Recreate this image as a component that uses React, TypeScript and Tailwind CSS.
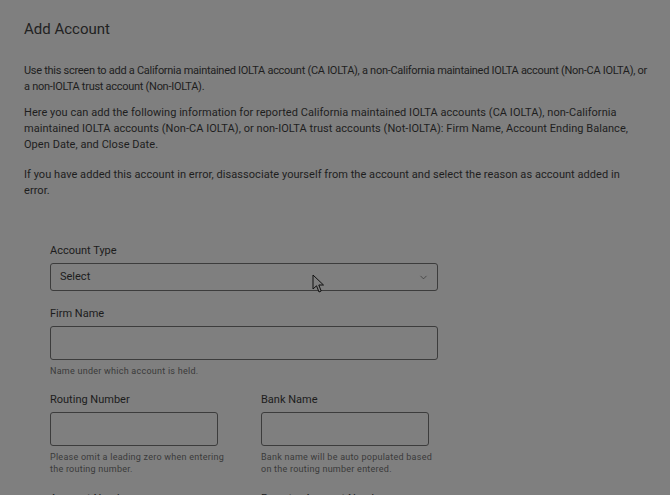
import { ChevronDown } from "lucide-react";

function Field({ label, help, className = "" }: { label: string; help?: React.ReactNode; className?: string }) {
    return (
        <div className={className}>
            <label className="block text-[11px] leading-[14px] text-[#1c1c1c]">{label}</label>
            <div className="mt-[5px] h-[34px] rounded-[3px] border border-[#3c3c3c]" />
            {help && <p className="mt-[5px] whitespace-nowrap text-[9px] leading-[12px] tracking-[0.25px] text-[#3a3a3a]">{help}</p>}
        </div>
    );
}

export default function App() {
    return (
        <div className="relative h-[495px] overflow-hidden bg-[#7f7f7f] font-['Roboto',sans-serif] text-[#1e1e1e]">
            <div className="px-6 pt-[19px]">
                <h1 className="text-[15px] leading-[20px] text-[#222]">Add Account</h1>

                <div className="mt-[24px] space-y-[10px] text-[11px] leading-[16px]">
                    <p className="w-[626px] tracking-[-0.28px]">
                        Use this screen to add a California maintained IOLTA account (CA IOLTA), a non-California maintained IOLTA account (Non-CA IOLTA), or a non-IOLTA trust account (Non-IOLTA).
                    </p>
                    <p className="w-[614px] tracking-[0.05px]">
                        Here you can add the following information for reported California maintained IOLTA accounts (CA IOLTA), non-California maintained IOLTA accounts (Non-CA IOLTA), or non-IOLTA trust accounts (Not-IOLTA): Firm Name, Account Ending Balance, Open Date, and Close Date.
                    </p>
                    <p className="w-[614px] pt-[4px] tracking-[0.05px]">
                        If you have added this account in error, disassociate yourself from the account and select the reason as account added in error.
                    </p>
                </div>

                <form className="mt-[45px] w-[388px] pl-[26px] box-content">
                    <div>
                        <label className="block text-[11px] leading-[14px] text-[#1c1c1c]">Account Type</label>
                        <div className="mt-[5px] flex h-[28px] items-center justify-between rounded-[3px] border border-[#3c3c3c] pl-[9px] pr-[8px]">
                            <span className="text-[11px] text-[#1c1c1c]">Select</span>
                            <ChevronDown className="h-[11px] w-[11px] text-[#333]" strokeWidth={1.5} />
                        </div>
                    </div>

                    <Field className="mt-[16px]" label="Firm Name" help="Name under which account is held." />

                    <div className="mt-[16px] grid grid-cols-[168px_168px] gap-x-[43px]">
                        <Field label="Routing Number" help={<>Please omit a leading zero when entering<br />the routing number.</>} />
                        <Field label="Bank Name" help={<>Bank name will be auto populated based<br />on the routing number entered.</>} />
                    </div>

                    <div className="mt-[17px] grid grid-cols-[168px_168px] gap-x-[43px]">
                        <Field label="Account Number" />
                        <Field label="Re-enter Account Number" />
                    </div>
                </form>
            </div>

            {/* mouse cursor */}
            <svg className="absolute left-[312px] top-[274px]" width="14" height="20" viewBox="0 0 14 20">
                <path d="M1 1 L1 15 L4.5 11.8 L7 18 L9.2 17 L6.8 11 L11.5 11 Z" fill="#7f7f7f" stroke="#111" strokeWidth="1" strokeLinejoin="round" />
            </svg>
        </div>
    );
}
